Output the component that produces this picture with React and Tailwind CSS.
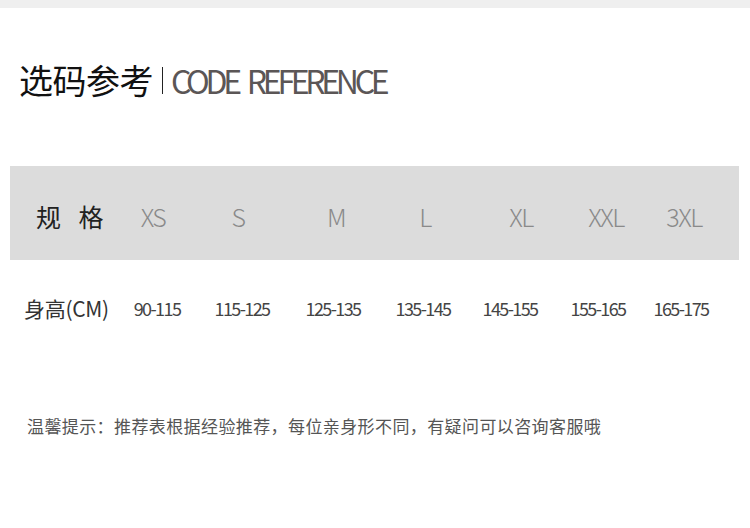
// 尺码参考表
const cjk = { fontFamily: '"Noto Sans CJK SC", "Noto Sans", sans-serif' };

const headerCols = [
  { label: 'XS', w: 'w-[80px]' },
  { label: 'S', w: 'w-[90px]' },
  { label: 'M', w: 'w-[106px]' },
  { label: 'L', w: 'w-[72px]' },
  { label: 'XL', w: 'w-[120px]' },
  { label: 'XXL', w: 'w-[50px]' },
  { label: '3XL', w: 'w-[106px]' },
];

const dataCols = [
  { label: '90-115', w: 'w-[80px]' },
  { label: '115-125', w: 'w-[90px]' },
  { label: '125-135', w: 'w-[92px]' },
  { label: '135-145', w: 'w-[88px]' },
  { label: '145-155', w: 'w-[86px]' },
  { label: '155-165', w: 'w-[90px]' },
  { label: '165-175', w: 'w-[76px]' },
];

export default function App() {
  return (
    <div className="w-[750px] h-[528px] bg-white overflow-hidden" style={cjk}>
      <div className="h-2 bg-[#efefef]" />

      {/* 标题 */}
      <div className="flex items-center pl-[19px] mt-[51px] h-[42px]">
        <span className="text-[34px] leading-none text-[#111] tracking-[-0.5px] whitespace-nowrap">选码参考</span>
        <span className="w-px h-[27px] bg-[#222] ml-[9px] mr-[8px]" />
        <span className="text-[32px] leading-none text-[#5b5656] tracking-[-4.3px] whitespace-nowrap">CODE</span>
        <span className="ml-[9px] text-[32px] leading-none text-[#5b5656] tracking-[-4.3px] whitespace-nowrap">REFERENCE</span>
      </div>

      {/* 表头 */}
      <div className="mx-[10px] mt-[65px] h-[94px] pt-[6px] bg-[#dcdcdc] flex items-center w-[729px]">
        <div className="w-[103px] pl-[26px] text-[25px] text-[#222] leading-none tracking-[6px] whitespace-nowrap">规 格</div>
        {headerCols.map((c) => (
          <div key={c.label} className={`${c.w} text-center text-[25px] font-light text-[#8a8a8a] leading-none tracking-[-1.5px]`}>
            {c.label}
          </div>
        ))}
      </div>

      {/* 身高 */}
      <div className="mx-[10px] mt-[34px] h-[28px] flex items-center">
        <div className="w-[107px] pl-[14px] text-[21px] text-[#333] leading-none tracking-[-0.3px] whitespace-nowrap">身高(CM)</div>
        {dataCols.map((c) => (
          <div key={c.label} className={`${c.w} text-center text-[18px] text-[#444] leading-none tracking-[-1.6px] whitespace-nowrap`}>
            {c.label}
          </div>
        ))}
      </div>

      <p className="pl-[27px] mt-[95px] text-[17px] leading-none text-[#555] tracking-[0.4px] whitespace-nowrap">
        温馨提示：推荐表根据经验推荐，每位亲身形不同，有疑问可以咨询客服哦
      </p>
    </div>
  );
}
